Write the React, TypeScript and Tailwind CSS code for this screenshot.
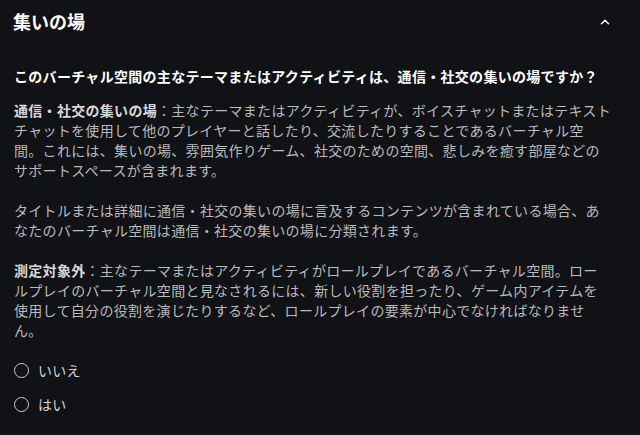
import { ChevronUp } from 'lucide-react';

const font = { fontFamily: '"Noto Sans CJK JP", "Noto Sans", sans-serif' };

function Radio({ label }: { label: string }) {
  return (
    <label className="flex items-center gap-[9px] h-[20px] cursor-pointer">
      <span className="w-[15px] h-[15px] rounded-full border-[1.5px] border-[#c9cacc]" />
      <span className="text-[14px] text-[#d4d5d7]">{label}</span>
    </label>
  );
}

export default function App() {
  return (
    <div className="w-[640px] h-[435px] bg-[#111216] overflow-hidden" style={font}>
      <div className="flex items-center justify-between pl-[13px] pr-[28px] pt-[9px] h-[34px]">
        <h1 className="text-[18px] font-bold text-white">集いの場</h1>
        <ChevronUp size={14} strokeWidth={2.5} className="text-white" />
      </div>
      <div className="pl-[14px] w-[626px] mt-[32px] text-[14px] tracking-[0.3px] leading-[20px] whitespace-nowrap">
        <p className="font-bold text-white">
          このバーチャル空間の主なテーマまたはアクティビティは、通信・社交の集いの場ですか？
        </p>
        <div className="mt-[14px] text-[#b9babd] space-y-[20px]">
          <p>
            <span className="font-bold text-[#d6d7d9]">通信・社交の集いの場</span>：主なテーマまたはアクティビティが、ボイスチャットまたはテキスト
            <br />
            チャットを使用して他のプレイヤーと話したり、交流したりすることであるバーチャル空
            <br />
            間。これには、集いの場、雰囲気作りゲーム、社交のための空間、悲しみを癒す部屋などの
            <br />
            サポートスペースが含まれます。
          </p>
          <p>
            タイトルまたは詳細に通信・社交の集いの場に言及するコンテンツが含まれている場合、あ
            <br />
            なたのバーチャル空間は通信・社交の集いの場に分類されます。
          </p>
          <p>
            <span className="font-bold text-[#d6d7d9]">測定対象外</span>：主なテーマまたはアクティビティがロールプレイであるバーチャル空間。ロー
            <br />
            ルプレイのバーチャル空間と見なされるには、新しい役割を担ったり、ゲーム内アイテムを
            <br />
            使用して自分の役割を演じたりするなど、ロールプレイの要素が中心でなければなりませ
            <br />
            ん。
          </p>
        </div>
        <div className="mt-[20px] flex flex-col gap-[14px]">
          <Radio label="いいえ" />
          <Radio label="はい" />
        </div>
      </div>
    </div>
  );
}
